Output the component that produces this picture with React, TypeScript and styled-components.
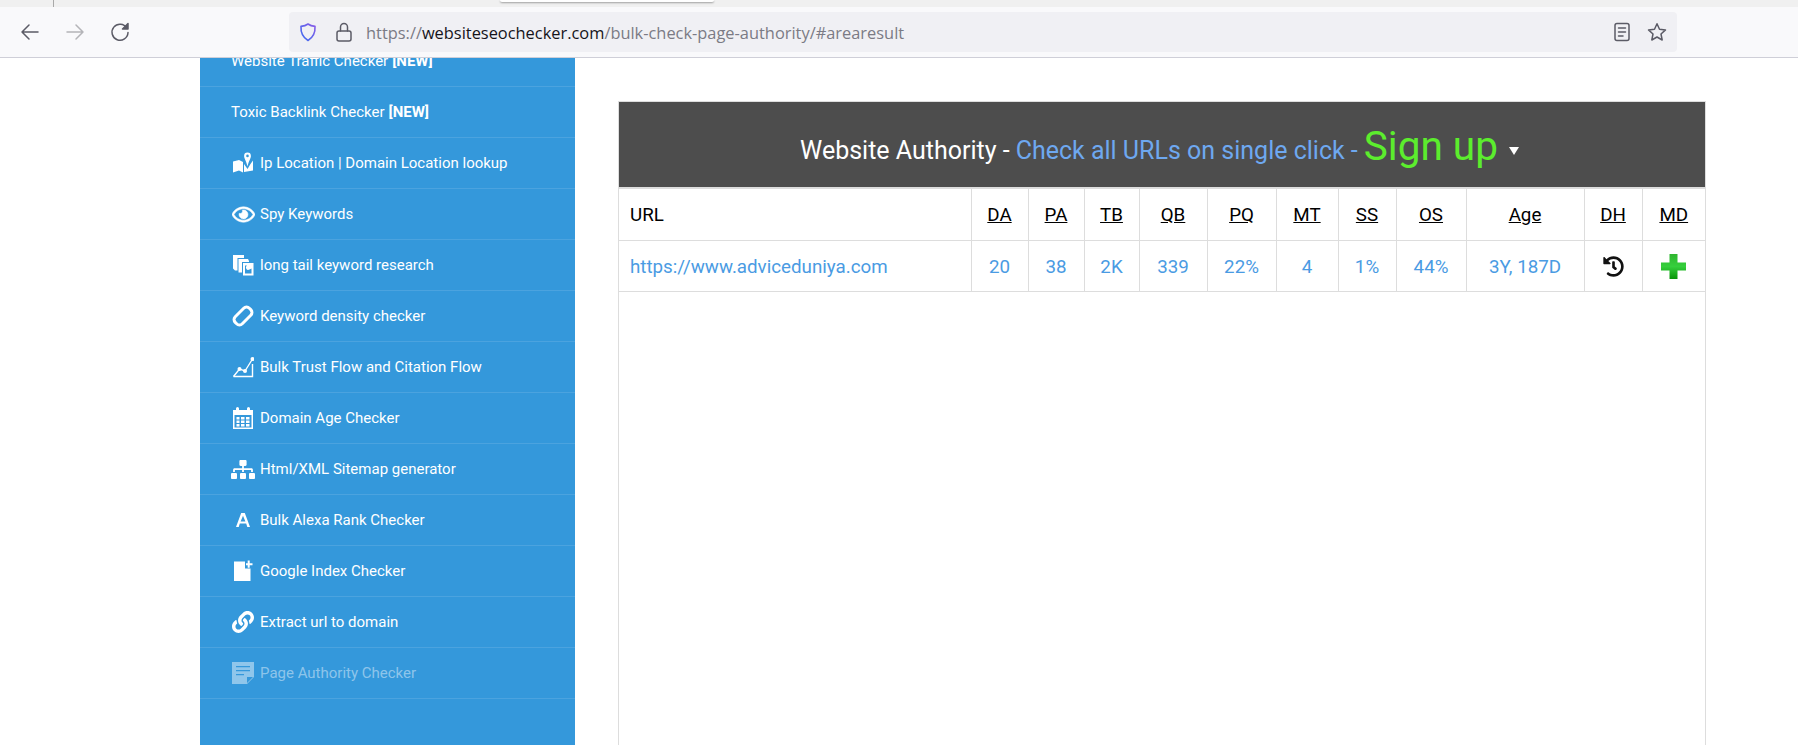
import React, { FC, ReactNode } from 'react';
import styled, { createGlobalStyle } from 'styled-components';
import { FaHistory, FaLink, FaRegEye, FaSitemap } from 'react-icons/fa';

const GlobalStyle = createGlobalStyle`
    html, body {
        margin: 0;
        height: 100%;
        overflow: hidden;
        background: #fff;
        font-family: Roboto, "Liberation Sans", sans-serif;
    }
`;

const Page = styled.div`
    display: flex;
    flex-direction: column;
    height: 745px;
`;

const TabStrip = styled.div`
    display: flex;
    height: 7px;
    background: #f0f0f0;
    overflow: hidden;
`;

const TabDivider = styled.div`
    width: 1px;
    height: 7px;
    margin-left: 53px;
    background: #a9a9a9;
`;

const ActiveTabEdge = styled.div`
    width: 214px;
    height: 2px;
    margin-left: 446px;
    background: #fff;
    border-radius: 0 0 4px 4px;
    box-shadow: 0 1px 2px rgba(0, 0, 0, 0.35);
`;

const Toolbar = styled.div`
    display: flex;
    align-items: center;
    height: 51px;
    padding-left: 20px;
    box-sizing: border-box;
    background: #f9f9fb;
    border-bottom: 1px solid #cfcfd8;
`;

const NavButton = styled.span<{ $disabled?: boolean }>`
    display: flex;
    width: 20px;
    height: 20px;
    margin-right: 25px;
    color: ${props => (props.$disabled ? '#b4b4b8' : '#5b5b66')};
`;

const UrlBar = styled.div`
    display: flex;
    align-items: center;
    width: 1388px;
    height: 40px;
    margin-left: 134px;
    padding: 0 10px 0 9px;
    box-sizing: border-box;
    background: #f0f0f4;
    border-radius: 4px;
`;

const UrlIcon = styled.span<{ $color: string; $gap: number }>`
    display: flex;
    width: 20px;
    height: 20px;
    margin-right: ${props => props.$gap}px;
    color: ${props => props.$color};
`;

const UrlText = styled.div`
    flex: 1;
    padding-top: 1px;
    font-family: "Open Sans", "Noto Sans", sans-serif;
    font-size: 16.4px;
    color: #7b7b85;
    white-space: nowrap;
`;

const UrlHost = styled.span`
    color: #15141a;
`;

const Content = styled.div`
    display: flex;
    flex: 1;
    min-height: 0;
    padding-left: 200px;
`;

const Sidebar = styled.nav`
    width: 375px;
    background: #3498db;
    overflow: hidden;
`;

const SideList = styled.ul`
    list-style: none;
    margin: -22px 0 0;
    padding: 0;
`;

const SideRow = styled.li<{ $dim?: boolean }>`
    display: flex;
    align-items: center;
    height: 51px;
    box-sizing: border-box;
    padding-left: 31px;
    border-bottom: 1px solid #4ba3df;
    color: ${props => (props.$dim ? 'rgba(255, 255, 255, 0.45)' : '#fff')};
    font-size: 15px;
    white-space: nowrap;
`;

const SideIcon = styled.span`
    display: flex;
    align-items: center;
    justify-content: center;
    width: 24px;
    height: 24px;
    margin-right: 5px;
`;

const NewTag = styled.b`
    margin-left: 4px;
`;

const Main = styled.main`
    width: 1088px;
    margin-left: 43px;
    margin-top: 43px;
    border: 1px solid #ddd;
    border-bottom: none;
    box-sizing: border-box;
`;

const Banner = styled.div`
    display: flex;
    align-items: center;
    justify-content: center;
    height: 85px;
    padding: 12px 5px 0 0;
    box-sizing: border-box;
    background: #4d4d4d;
    color: #fff;
    font-size: 25px;
    white-space: nowrap;
`;

const BannerLink = styled.span`
    margin-left: 6px;
    color: #6ea8f0;
`;

const SignUp = styled.span`
    margin-left: 6px;
    font-size: 40.5px;
    line-height: 40px;
    color: #5ced2d;
    position: relative;
    top: -5px;
`;

const Caret = styled.span`
    width: 0;
    height: 0;
    margin-left: 11px;
    border-left: 5px solid transparent;
    border-right: 5px solid transparent;
    border-top: 8px solid #fff;
`;

const Table = styled.table`
    width: 100%;
    table-layout: fixed;
    border-collapse: collapse;
    border-top: 2px solid #ddd;
`;

const Col = styled.col<{ $width: number }>`
    width: ${props => props.$width}px;
`;

const HeadCell = styled.th<{ $left?: boolean }>`
    height: 51px;
    padding: 0 ${props => (props.$left ? '11px' : '0')};
    border: 1px solid #ddd;
    border-top: none;
    font-size: 18.75px;
    font-weight: 400;
    color: #000;
    text-align: ${props => (props.$left ? 'left' : 'center')};
    text-decoration: ${props => (props.$left ? 'none' : 'underline')};
    &:first-child { border-left: none; }
    &:last-child { border-right: none; }
`;

const BodyCell = styled.td<{ $left?: boolean }>`
    height: 51px;
    box-sizing: border-box;
    padding: 1px ${props => (props.$left ? '11px' : '0')} 0;
    border: 1px solid #ddd;
    font-size: 18.75px;
    color: #4a9be3;
    text-align: ${props => (props.$left ? 'left' : 'center')};
    &:first-child { border-left: none; }
    &:last-child { border-right: none; }
`;

const HistoryIcon = styled(FaHistory)`
    display: block;
    width: 21px;
    height: 21px;
    margin: 0 auto;
    color: #111;
`;

const PlusIcon = styled.svg`
    display: block;
    margin: 0 auto;
`;

const ThickEye = styled(FaRegEye)`
    stroke: currentColor;
    stroke-width: 14px;
`;

const Glyph: FC<{ children: ReactNode; w?: number; h?: number; vb?: string }> = ({ children, w = 22, h = 22, vb = '0 0 22 22' }) => (
    <svg width={w} height={h} viewBox={vb} fill="currentColor">{children}</svg>
);

const Stroke: FC<{ children: ReactNode }> = ({ children }) => (
    <svg width="20" height="20" viewBox="0 0 20 20" fill="none" stroke="currentColor" strokeWidth="1.5" strokeLinecap="round" strokeLinejoin="round">{children}</svg>
);

const sideItems: { label: string; tag?: boolean; dim?: boolean; icon?: ReactNode }[] = [
    { label: 'Website Traffic Checker', tag: true },
    { label: 'Toxic Backlink Checker', tag: true },
    {
        label: 'Ip Location | Domain Location lookup',
        icon: <Glyph><path fillRule="evenodd" d="M1 9.5 L7 8 L11 10 L11 20.5 L7 18.5 L1 20.5 Z M12 20 L12 12 L15.5 17 L18.5 12 L21 8.5 L21 18.5 Z M15.5 .5 A3.4 3.4 0 0 1 18.9 3.9 C18.9 6.5 16.5 9 15.5 14.5 C14.5 9 12.1 6.5 12.1 3.9 A3.4 3.4 0 0 1 15.5 .5 Z M15.5 2.6 A1.3 1.3 0 1 0 15.5 5.2 A1.3 1.3 0 1 0 15.5 2.6 Z" /></Glyph>,
    },
    { label: 'Spy Keywords', icon: <ThickEye size={23} /> },
    {
        label: 'long tail keyword research',
        icon: <Glyph><path fillRule="evenodd" d="M1 1 H12 V4 H5.5 V16.5 H3 L1 14.5 Z M6.5 5 H16 L17 7 V8 H10 V18.5 H6.5 Z M11 9 H21.5 V21.5 H11 Z M13 11.5 V19.5 H19.5 V14.5 L17.5 15.5 A2.2 2.2 0 0 1 15 11.5 Z" /></Glyph>,
    },
    {
        label: 'Keyword density checker',
        icon: <Glyph><rect x="1" y="6" width="20" height="10" rx="4" fill="none" stroke="currentColor" strokeWidth="3" transform="rotate(-45 11 11)" /></Glyph>,
    },
    {
        label: 'Bulk Trust Flow and Citation Flow',
        icon: <Glyph><g fill="none" stroke="currentColor" strokeWidth="1.4"><path d="M1.5 20.5 L7.5 13 L13 15 L20.5 3" /><path d="M20.5 8 V20.5 H1.5" /></g><circle cx="7.5" cy="13" r="2" /><circle cx="13" cy="15" r="2" /><circle cx="20.5" cy="3" r="2" /></Glyph>,
    },
    {
        label: 'Domain Age Checker',
        icon: <Glyph><path fillRule="evenodd" d="M1 3 H4 V1.5 A1.5 1.5 0 0 1 7 1.5 V3 H15 V1.5 A1.5 1.5 0 0 1 18 1.5 V3 H21 V22 H1 Z M2.5 8 V20.5 H19.5 V8 Z" /><path d="M4.5 10 H7.5 V12.5 H4.5 Z M9 10 H12.5 V12.5 H9 Z M14 10 H17.5 V12.5 H14 Z M4.5 13.5 H7.5 V16 H4.5 Z M9 13.5 H12.5 V16 H9 Z M14 13.5 H17.5 V16 H14 Z M4.5 17 H7.5 V19.5 H4.5 Z M9 17 H12.5 V19.5 H9 Z M14 17 H17.5 V19.5 H14 Z" /></Glyph>,
    },
    { label: 'Html/XML Sitemap generator', icon: <FaSitemap size={25} /> },
    {
        label: 'Bulk Alexa Rank Checker',
        icon: <Glyph w={14} h={14} vb="0 0 14 14"><path fillRule="evenodd" d="M5.2 0 H8.8 L14 14 H11.3 L10.2 10.6 H3.8 L2.7 14 H0 Z M7 2.8 L4.6 8.5 H9.4 Z" /></Glyph>,
    },
    {
        label: 'Google Index Checker',
        icon: <Glyph><path d="M2 1.5 H13 V8.5 H18.5 V21 H2 Z" /><path d="M15.7 .5 H17.7 V3.2 H20.5 V5.2 H17.7 V7.8 H15.7 V5.2 H14 V3.2 H15.7 Z" /></Glyph>,
    },
    { label: 'Extract url to domain', icon: <FaLink size={22} /> },
    {
        label: 'Page Authority Checker',
        dim: true,
        icon: <Glyph w={24} h={24} vb="0 0 24 24"><path fillRule="evenodd" d="M1 1 H23 V16 L16 23 H1 Z M5 5 V6.3 H19 V5 Z M5 9 V10.3 H19 V9 Z M5 13 V14.3 H13 V13 Z M16 22 V16 H22 Z" /></Glyph>,
    },
];

const columns = [352, 57, 56, 55, 68, 69, 62, 58, 70, 118, 58, 63];
const headers = ['URL', 'DA', 'PA', 'TB', 'QB', 'PQ', 'MT', 'SS', 'OS', 'Age', 'DH', 'MD'];
const values = ['https://www.adviceduniya.com', '20', '38', '2K', '339', '22%', '4', '1%', '44%', '3Y, 187D'];

const App: FC = () => (
    <Page>
        <GlobalStyle />
        <TabStrip>
            <TabDivider />
            <ActiveTabEdge />
        </TabStrip>
        <Toolbar>
            <NavButton><Stroke><path d="M18 10 H2.5 M9 3 L2 10 L9 17" /></Stroke></NavButton>
            <NavButton $disabled><Stroke><path d="M2 10 H17.5 M11 3 L18 10 L11 17" /></Stroke></NavButton>
            <NavButton>
                <Stroke><path d="M16.8 6 A8 8 0 1 0 18 10.5" /><path d="M18 1.5 V7 H12.5 Z" fill="currentColor" /></Stroke>
            </NavButton>
            <UrlBar>
                <UrlIcon $color="#5a5ce6" $gap={16}>
                    <svg width="20" height="20" viewBox="0 0 20 20" fill="none" strokeWidth="1.6" strokeLinejoin="round">
                        <defs>
                            <linearGradient id="shieldStroke" x1="0" y1="1" x2="1" y2="0">
                                <stop offset="0" stopColor="#3a6cf0" />
                                <stop offset="1" stopColor="#8a5ce6" />
                            </linearGradient>
                        </defs>
                        <path d="M10 2 C12.5 3.8 15 4.2 17 4.4 C17.4 10.5 15 15.5 10 18.5 C5 15.5 2.6 10.5 3 4.4 C5 4.2 7.5 3.8 10 2 Z" stroke="url(#shieldStroke)" />
                    </svg>
                </UrlIcon>
                <UrlIcon $color="#5b5b66" $gap={12}>
                    <Stroke><rect x="3" y="9" width="14" height="10" rx="2" /><path d="M6.5 9 V5 A3.5 3.5 0 0 1 13.5 5 V9" /></Stroke>
                </UrlIcon>
                <UrlText>https://<UrlHost>websiteseochecker.com</UrlHost>/bulk-check-page-authority/#arearesult</UrlText>
                <UrlIcon $color="#5b5b66" $gap={15}>
                    <Stroke><rect x="3" y="1.5" width="14" height="17" rx="2" /><path d="M6.5 6 H13.5 M6.5 10 H13.5 M6.5 14 H11" /></Stroke>
                </UrlIcon>
                <UrlIcon $color="#5b5b66" $gap={0}>
                    <Stroke><path d="M10 1.8 L12.5 7.2 L18.5 7.9 L14 12 L15.2 18 L10 15 L4.8 18 L6 12 L1.5 7.9 L7.5 7.2 Z" /></Stroke>
                </UrlIcon>
            </UrlBar>
        </Toolbar>
        <Content>
            <Sidebar>
                <SideList>
                    {sideItems.map(item => (
                        <SideRow key={item.label} $dim={item.dim}>
                            {item.icon && <SideIcon>{item.icon}</SideIcon>}
                            {item.label}
                            {item.tag && <NewTag>[NEW]</NewTag>}
                        </SideRow>
                    ))}
                </SideList>
            </Sidebar>
            <Main>
                <Banner>
                    Website Authority -
                    <BannerLink>Check all URLs on single click -</BannerLink>
                    <SignUp>Sign up</SignUp>
                    <Caret />
                </Banner>
                <Table>
                    <colgroup>
                        {columns.map((width, index) => <Col key={index} $width={width} />)}
                    </colgroup>
                    <thead>
                        <tr>
                            {headers.map((header, index) => <HeadCell key={header} $left={index === 0}>{header}</HeadCell>)}
                        </tr>
                    </thead>
                    <tbody>
                        <tr>
                            {values.map((value, index) => <BodyCell key={value} $left={index === 0}>{value}</BodyCell>)}
                            <BodyCell><HistoryIcon /></BodyCell>
                            <BodyCell>
                                <PlusIcon width="25" height="25" viewBox="0 0 25 25">
                                    <defs>
                                        <linearGradient id="plusFill" x1="0" y1="0" x2="0" y2="1">
                                            <stop offset="0" stopColor="#2fb52f" />
                                            <stop offset=".5" stopColor="#35cf3c" />
                                            <stop offset="1" stopColor="#089408" />
                                        </linearGradient>
                                    </defs>
                                    <path d="M8.5 0 H16.5 V8.5 H25 V16.5 H16.5 V25 H8.5 V16.5 H0 V8.5 H8.5 Z" fill="url(#plusFill)" />
                                </PlusIcon>
                            </BodyCell>
                        </tr>
                    </tbody>
                </Table>
            </Main>
        </Content>
    </Page>
);

export default App;
